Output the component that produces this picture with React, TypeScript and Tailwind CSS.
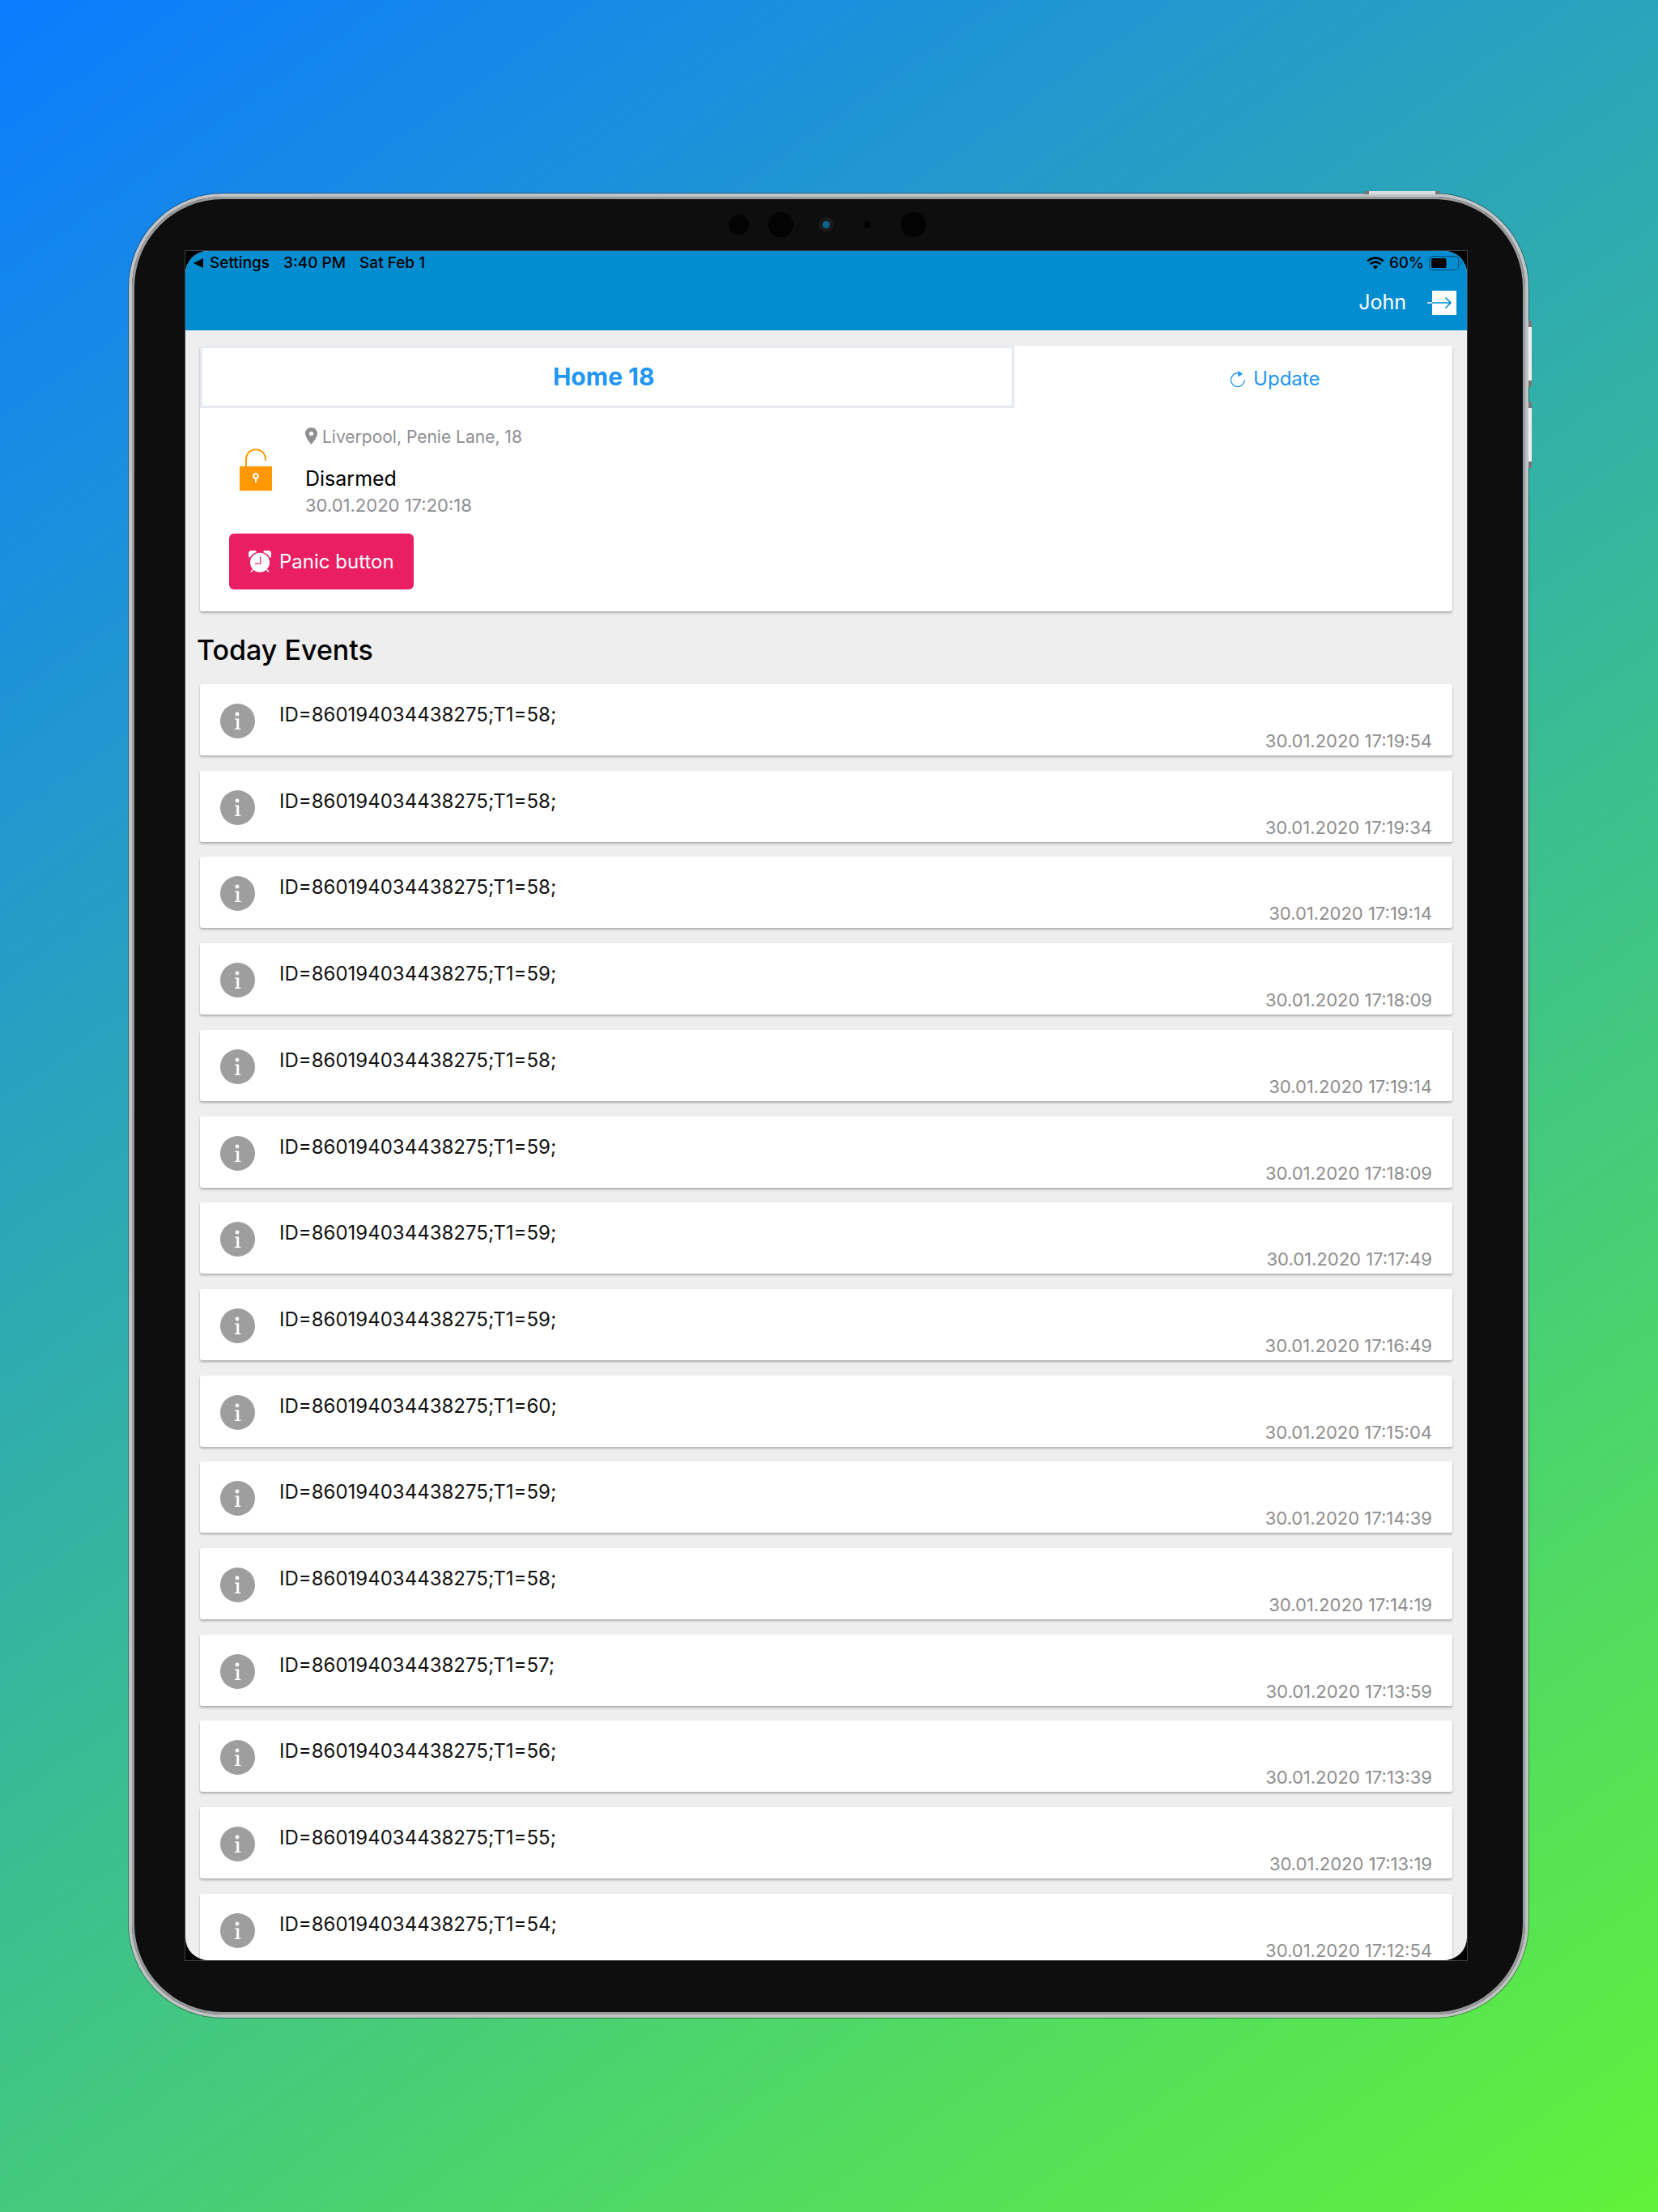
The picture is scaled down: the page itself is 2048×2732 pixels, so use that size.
import type { ReactNode } from 'react';

interface EventItem {
  id: number;
  value: number;
  time: string;
}

const DEVICE_ID = '860194034438275';

const EVENTS: EventItem[] = [
  { id: 1, value: 58, time: '17:19:54' },
  { id: 2, value: 58, time: '17:19:34' },
  { id: 3, value: 58, time: '17:19:14' },
  { id: 4, value: 59, time: '17:18:09' },
  { id: 5, value: 58, time: '17:19:14' },
  { id: 6, value: 59, time: '17:18:09' },
  { id: 7, value: 59, time: '17:17:49' },
  { id: 8, value: 59, time: '17:16:49' },
  { id: 9, value: 60, time: '17:15:04' },
  { id: 10, value: 59, time: '17:14:39' },
  { id: 11, value: 58, time: '17:14:19' },
  { id: 12, value: 57, time: '17:13:59' },
  { id: 13, value: 56, time: '17:13:39' },
  { id: 14, value: 55, time: '17:13:19' },
  { id: 15, value: 54, time: '17:12:54' },
];

function InfoIcon() {
  return (
    <svg viewBox="0 0 43 43" className="size-[43px] shrink-0" aria-hidden="true">
      <circle cx="21.5" cy="21.5" r="21.5" fill="#9e9e9e" />
      <circle cx="21" cy="13" r="2.4" fill="#fff" />
      <path d="M18 18.400h5.200v12.400h2.200v1.300h-7.600v-1.300h2.400V19.700H18z" fill="#fff" />
    </svg>
  );
}

function UnlockedIcon() {
  return (
    <svg viewBox="0 0 40 52" className="h-[52px] w-10" aria-hidden="true">
      <path d="M8 23V13.500C8 6.500 13 1.200 20 1.200S32 6.500 32 13v1.400" fill="none" stroke="#ff9800" strokeWidth="2" />
      <rect y="22" width="40" height="30" fill="#ff9800" />
      <circle cx="20" cy="34" r="2.8" fill="none" stroke="#fff" strokeWidth="2" />
      <path d="M20 36.500v5.500" stroke="#fff" strokeWidth="2" />
    </svg>
  );
}

function PinIcon() {
  return (
    <svg viewBox="0 0 15 21" className="mb-1 h-[21px] w-[15px]" aria-hidden="true">
      <path
        d="M7.500 0C3.300 0 0 3.200 0 7.300 0 12.700 7.500 21 7.500 21S15 12.700 15 7.300C15 3.200 11.700 0 7.500 0zm0 10.100a2.600 2.600 0 1 1 0-5.200 2.600 2.600 0 0 1 0 5.200z"
        fill="#8e8e93"
      />
    </svg>
  );
}

function RefreshIcon() {
  return (
    <svg viewBox="0 0 18 20" className="h-5 w-[18px]" aria-hidden="true">
      <path d="M17.300 11.200A8.400 8.400 0 1 1 9 2.800h1.400" fill="none" stroke="#2196f3" strokeWidth="1.300" />
      <path d="M9.200 0l6 3.800-6 3.600z" fill="#2196f3" />
    </svg>
  );
}

function AlarmIcon() {
  return (
    <svg viewBox="0 0 28 27" className="h-[27px] w-7" aria-hidden="true">
      <path
        d="M.9 8.200A5.200 5.200 0 0 1 9.600 1.700C6 2.800 3.200 5 1.600 8.200zM27.100 8.200a5.200 5.200 0 0 0-8.700-6.500c3.600 1.100 6.400 3.300 8 6.500z"
        fill="#fff"
        stroke="#fff"
        strokeWidth="1"
      />
      <path d="M5.500 23.500L3 26.400M22.500 23.500l2.500 2.900" stroke="#fff" strokeWidth="1.600" />
      <circle cx="14" cy="14.700" r="12" fill="#fff" />
      <path d="M14.600 7.500v8.600H7.800" fill="none" stroke="#e91e63" strokeWidth="1.200" />
    </svg>
  );
}

function LogoutIcon() {
  return (
    <svg viewBox="0 0 36 30" className="h-[30px] w-9" aria-hidden="true">
      <rect x="6" width="30" height="30" fill="#fff" />
      <path d="M0 15h6" stroke="#fff" strokeWidth="1.600" />
      <path d="M6 15h22.500M22.500 8.500L29 15l-6.500 6.500" fill="none" stroke="#038dd1" strokeWidth="1.600" />
    </svg>
  );
}

function WifiIcon() {
  return (
    <svg viewBox="0 0 22 16" className="h-4 w-[22px]" aria-hidden="true">
      <path
        d="M1.200 5.600a14 14 0 0 1 19.600 0M4.700 9.200a9 9 0 0 1 12.600 0"
        fill="none"
        stroke="#000"
        strokeWidth="2.600"
      />
      <path d="M11 15.600L7.600 12.300a5 5 0 0 1 6.800 0z" fill="#000" />
    </svg>
  );
}

function BatteryIcon() {
  return (
    <svg viewBox="0 0 41 18" className="h-[18px] w-[41px]" aria-hidden="true">
      <rect x=".6" y=".6" width="36" height="16.800" rx="4.500" fill="none" stroke="#000" strokeOpacity=".4" strokeWidth="1.200" />
      <rect x="3" y="3" width="18.500" height="12" rx="2" fill="#000" />
      <path d="M39 6.200c1.600.6 1.600 5 0 5.600z" fill="#000" fillOpacity=".4" />
    </svg>
  );
}

function Card({ className, children }: { className: string; children: ReactNode }) {
  return (
    <div className={`rounded-[3px] bg-white shadow-[0_2px_3px_rgba(0,0,0,0.28)] ${className}`}>{children}</div>
  );
}

function StatusBar() {
  return (
    <div className="flex h-[30px] items-center justify-between pr-1.5 pl-2.5 text-[19px] leading-7 font-medium text-black">
      <div className="flex items-center gap-[17px]">
        <button className="flex items-center gap-2">
          <svg viewBox="0 0 12 12" className="size-3" aria-hidden="true">
            <path d="M12 0v12L0 6z" />
          </svg>
          Settings
        </button>
        <span>3:40 PM</span>
        <span>Sat Feb 1</span>
      </div>
      <div className="flex items-center gap-1.5">
        <WifiIcon />
        <span>60%</span>
        <BatteryIcon />
      </div>
    </div>
  );
}

function HomeCard() {
  return (
    <Card className="h-[328px] shrink-0">
      <div className="flex">
        <button className="h-[77px] w-[65%] border-[3px] border-[#e6eaf0] pr-2 text-[30px] font-bold text-[#2196f3]">
          Home 18
        </button>
        <button className="flex flex-1 items-center justify-center gap-2.5 pt-1 pl-[104px] text-[24px] text-[#2196f3]">
          <RefreshIcon />
          Update
        </button>
      </div>
      <div className="flex pt-5 pl-[49px]">
        <div className="w-[81px] pt-[30px]">
          <UnlockedIcon />
        </div>
        <div className="flex flex-col">
          <div className="flex items-center gap-1.5 text-[21px] leading-8 text-[#8e8e93]">
            <PinIcon />
            Liverpool, Penie Lane, 18
          </div>
          <div className="pt-[17px] text-[25px] leading-9 text-black">Disarmed</div>
          <div className="text-[22px] leading-[30px] text-[#8e8e93]">30.01.2020 17:20:18</div>
        </div>
      </div>
      <button className="mt-5 ml-9 flex h-[69px] items-center gap-2.5 rounded-md bg-[#e91e63] px-6 text-[24px] text-white">
        <AlarmIcon />
        Panic button
      </button>
    </Card>
  );
}

function EventCard({ event }: { event: EventItem }) {
  return (
    <Card className="flex h-[88px] shrink-0 justify-between px-[25px]">
      <div className="flex gap-[30px]">
        <div className="pt-6">
          <InfoIcon />
        </div>
        <span className="pt-5 text-[24px] leading-9 text-[#111]">
          ID={DEVICE_ID};T1={event.value};
        </span>
      </div>
      <time className="self-end pb-1 text-[22px] leading-7 text-[#8e8e8e]">30.01.2020 {event.time}</time>
    </Card>
  );
}

export default function App() {
  return (
    <div className="flex h-screen bg-[linear-gradient(145deg,#0c7bff_0%,#61f23a_100%)] pt-[239px] pr-40 pb-60 pl-[159px] font-[Inter,'Liberation_Sans',sans-serif]">
      {/* Tablet body */}
      <div className="relative flex min-w-0 flex-1 rounded-[116px] border-4 border-[#c0c3c5] bg-[#0e0e0e] pt-[67px] pr-[72px] pb-[67px] pl-[66px] shadow-[0_0_0_1px_rgba(0,0,0,0.35),inset_0_0_0_3px_#98999b]">
        {/* Power and volume buttons */}
        <div className="absolute -top-[7px] right-[105px] h-1 w-[94px] border-x-[6px] border-[#777] bg-[#dcdcdc]" />
        <div className="absolute top-[153px] -right-[8px] h-[82px] w-1 border-y-[8px] border-[#777] bg-[#f0f0f0]" />
        <div className="absolute top-[253px] -right-[8px] h-[82px] w-1 border-y-[8px] border-[#777] bg-[#f0f0f0]" />

        {/* Sensors */}
        <div className="absolute top-1 left-[737px] flex h-[60px] items-center">
          <span className="size-[25px] rounded-full bg-[#030303]" />
          <span className="ml-6 size-[31px] rounded-full bg-[#030303]" />
          <span className="ml-[31px] flex size-[19px] items-center justify-center rounded-full bg-[#1a1a1a]">
            <span className="size-[9px] rounded-full bg-[#0f6288]" />
          </span>
          <span className="ml-[37px] size-[9px] rounded-full bg-[#030303]" />
          <span className="ml-[37px] size-[31px] rounded-full bg-[#030303]" />
        </div>

        <div className="flex min-w-0 flex-1 bg-black shadow-[0_0_0_1px_#3c4042]">
          <div className="flex min-w-0 flex-1 flex-col overflow-hidden rounded-[28px] bg-[#eeeeee]">
            <header className="shrink-0 bg-[#038dd1]">
              <StatusBar />
              <div className="flex h-[68px] items-center justify-end gap-[26px] pr-[13px] text-[25px] text-white">
                John
                <button aria-label="Log out">
                  <LogoutIcon />
                </button>
              </div>
            </header>

            <main className="flex min-h-0 flex-1 flex-col px-[18px] pt-[19px]">
              <HomeCard />
              <h1 className="-ml-1 pt-[29px] pb-[23px] text-[34px] leading-[38px] font-medium text-black">
                Today Events
              </h1>
              <div className="-mb-1.5 flex flex-1 flex-col justify-between">
                {EVENTS.map((event) => (
                  <EventCard key={event.id} event={event} />
                ))}
              </div>
            </main>
          </div>
        </div>
      </div>
    </div>
  );
}
